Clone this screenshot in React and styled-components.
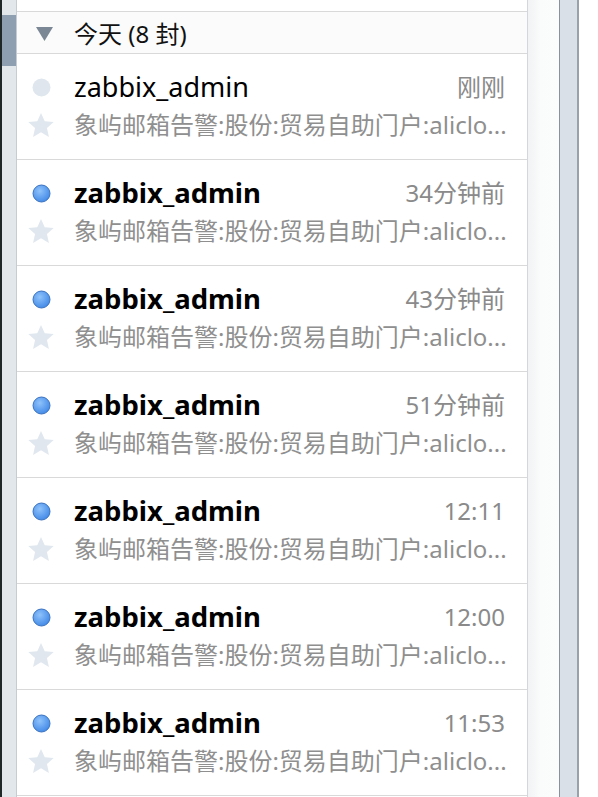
import React from "react";
import styled, { createGlobalStyle } from "styled-components";

const GlobalStyle = createGlobalStyle`
  html, body {
    margin: 0;
    padding: 0;
    background: #ffffff;
    overflow: hidden;
  }
  body {
    font-family: "Noto Sans", "Noto Sans CJK SC", sans-serif;
  }
`;

const Page = styled.div`
  display: flex;
  width: 598px;
  height: 797px;
  overflow: hidden;
  background: #ffffff;
`;

const Track = styled.div`
  width: 14px;
  flex: 0 0 14px;
  background: #e2e7eb;
  border-left: 2px solid #1f2727;
  border-right: 1px solid #c6ccd1;
  padding-top: 15px;
`;

const Thumb = styled.div`
  height: 51px;
  background: #8e9fb2;
`;

const List = styled.div`
  width: 510px;
  flex: 0 0 510px;
  border-right: 1px solid #d3d7db;
  display: flex;
  flex-direction: column;
  & > * {
    flex-shrink: 0;
  }
`;

const PrevTail = styled.div`
  height: 11px;
  border-bottom: 1px solid #d9d9d9;
`;

const GroupHeader = styled.div`
  height: 41px;
  display: flex;
  align-items: center;
  gap: 21px;
  padding-left: 19px;
  background: #fbfbfb;
  border-bottom: 1px solid #d9d9d9;
  font-size: 24px;
  color: #111;
`;

const Caret = styled.svg`
  width: 17px;
  height: 14px;
  margin-top: 2px;
`;

const Row = styled.div`
  display: grid;
  grid-template-columns: 28px 1fr auto;
  grid-template-rows: 30px 30px;
  column-gap: 19px;
  row-gap: 8px;
  padding: 18px 22px 19px 10px;
  border-bottom: 1px solid #d9d9d9;
  align-items: center;
`;

const IconCell = styled.div`
  display: flex;
  justify-content: center;
  align-items: center;
`;

const Name = styled.div`
  font-size: ${(p) => (p.$unread ? "27.5px" : "27px")};
  color: #000;
  font-weight: ${(p) => (p.$unread ? 700 : 400)};
  white-space: nowrap;
  line-height: 30px;
`;

const Time = styled.div`
  font-size: 24px;
  color: #8a8a8a;
  text-align: right;
  line-height: 30px;
  white-space: nowrap;
`;

const Subject = styled.div`
  grid-column: 2 / 4;
  font-size: 24px;
  color: #8f8f8f;
  line-height: 30px;
  white-space: nowrap;
`;

const Gutter = styled.div`
  width: 31px;
  flex: 0 0 31px;
  background: linear-gradient(to right, #f1f3f4, #fafbfb 40%, #fbfcfc);
`;

const SidePanel = styled.div`
  width: 17px;
  flex: 0 0 17px;
  background: #d9e0e7;
  border-left: 1px solid #89929a;
  border-right: 2px solid #9aa2a9;
`;

function Dot({ unread }) {
  return (
    <svg width="19" height="19" viewBox="0 0 19 19">
      <defs>
        <radialGradient id="dotg" cx="40%" cy="35%" r="70%">
          <stop offset="0%" stopColor="#8fc3fb" />
          <stop offset="100%" stopColor="#3f87e6" />
        </radialGradient>
      </defs>
      {unread ? (
        <circle cx="9.5" cy="9.5" r="8.5" fill="url(#dotg)" stroke="#3a72c0" strokeWidth="1" />
      ) : (
        <circle cx="9.5" cy="9.5" r="9" fill="#dfe6ee" />
      )}
    </svg>
  );
}

function Star() {
  return (
    <svg width="28" height="27" viewBox="0 0 24 23">
      <path
        d="M12 0.8l3.2 7.1 7.7 0.7-5.8 5.1 1.7 7.6L12 17.3l-6.8 4 1.7-7.6-5.8-5.1 7.7-0.7z"
        fill="#e0e7ef"
      />
    </svg>
  );
}

const mails = [
  { unread: false, time: "刚刚" },
  { unread: true, time: "34分钟前" },
  { unread: true, time: "43分钟前" },
  { unread: true, time: "51分钟前" },
  { unread: true, time: "12:11" },
  { unread: true, time: "12:00" },
  { unread: true, time: "11:53" },
];

export default function App() {
  return (
    <>
      <GlobalStyle />
      <Page>
        <Track>
          <Thumb />
        </Track>
        <List>
          <PrevTail />
          <GroupHeader>
            <Caret viewBox="0 0 17 14">
              <path d="M0 0h17L8.5 14z" fill="#7b8794" />
            </Caret>
            <span>今天 (8 封)</span>
          </GroupHeader>
          {mails.map((m, i) => (
            <Row key={i}>
              <IconCell>
                <Dot unread={m.unread} />
              </IconCell>
              <Name $unread={m.unread}>zabbix_admin</Name>
              <Time>{m.time}</Time>
              <IconCell>
                <Star />
              </IconCell>
              <Subject>象屿邮箱告警:股份:贸易自助门户:aliclo...</Subject>
            </Row>
          ))}
        </List>
        <Gutter />
        <SidePanel />
      </Page>
    </>
  );
}
